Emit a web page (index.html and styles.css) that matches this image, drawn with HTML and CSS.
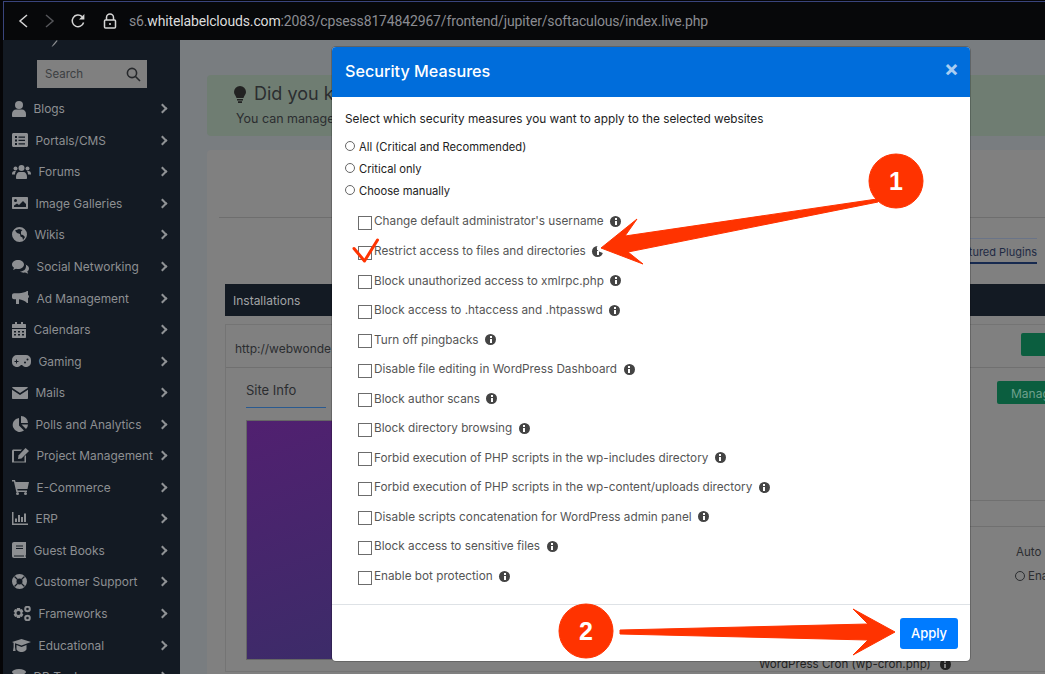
FILE: index.html
```html
<!DOCTYPE html>
<html>
<head>
    <title>Security Measures</title>
    <meta http-equiv='Content-Type' content='text/html; charset=utf-8' />
    <link rel="stylesheet" href="styles.css">
</head>

<body>
<div class="page">
    <div class="urlbar">
        <svg width="14" height="16" viewBox="0 0 14 16" class="navicon"><path d="M11 2 4 8l7 6" /></svg>
        <svg width="14" height="16" viewBox="0 0 14 16" class="navicon dim"><path d="M3 2l7 6-7 6" /></svg>
        <svg width="16" height="16" viewBox="0 0 16 16" class="navicon"><path d="M13.6 9.5A5.8 5.8 0 1 1 12 3.6" /><path class="solid" d="M14.4 1v5.4H9z" /></svg>
        <svg width="14" height="16" viewBox="0 0 14 16" class="navicon lock"><path d="M3.5 7V4.6a3.5 3.5 0 0 1 7 0V7" /><rect x="1.5" y="7" width="11" height="8" rx="1" /><path d="M7 10v2" /></svg>
        <div class="url">s6.<b>whitelabelclouds.com</b>:2083/cpsess8174842967/frontend/jupiter/softaculous/index.live.php</div>
    </div>

    <div class="main">
        <div class="sidebar">
            <div class="logo"><svg width="10" height="8" viewBox="0 0 10 8"><path d="M7 0C5 2 3 4 1.500 7 3 6.500 5 4 7.500 1" /></svg></div>
            <div class="search">
                <span>Search</span>
                <svg width="15" height="15" viewBox="0 0 15 15"><circle cx="6" cy="6" r="4.6" /><path d="M9.5 9.5 14 14" /></svg>
            </div>
            <div class="navlist">
                <div class="navrow"><span class="navlabel"><svg width="14" height="16" viewBox="0 0 14 16"><circle cx="7" cy="4" r="4" /><path d="M0 13c0-3 2-4.5 4-4.5h6c2 0 4 1.500 4 4.500v2c0 .6-.5 1-1 1H1c-.5 0-1-.4-1-1z" /></svg>Blogs</span><i class="chev"></i></div>
                <div class="navrow"><span class="navlabel"><svg width="16" height="14" viewBox="0 0 16 14"><path fill-rule="evenodd" d="M1.500 0h13c.8 0 1.500.7 1.500 1.500v11c0 .8-.7 1.500-1.500 1.500h-13C.7 14 0 13.300 0 12.500v-11C0 .7.700 0 1.500 0zM3 3v2h2V3zm0 3.500v2h2v-2zM3 10v2h2v-2zm3.500-6.500v1.200H13V3.500zm0 3.200v1.200H13V6.700zm0 3.500v1.200H13v-1.200z" /></svg>Portals/CMS</span><i class="chev"></i></div>
                <div class="navrow"><span class="navlabel"><svg width="19" height="14" viewBox="0 0 19 14"><circle cx="3.500" cy="3.500" r="2" /><circle cx="15.500" cy="3.500" r="2" /><circle cx="9.500" cy="3" r="3" /><path d="M0 9c0-2 1-3 2.500-3h1.500C3.500 7 3 8 3 9.500H0zM19 9c0-2-1-3-2.500-3H15c.5 1 1 2 1 3.500h3zM4 12c0-3 1.500-5 3.500-5h4c2 0 3.500 2 3.500 5v1c0 .6-.4 1-1 1H5c-.6 0-1-.4-1-1z" /></svg>Forums</span><i class="chev"></i></div>
                <div class="navrow"><span class="navlabel"><svg width="16" height="12" viewBox="0 0 16 12"><path fill-rule="evenodd" d="M1 0h14c.6 0 1 .4 1 1v10c0 .6-.4 1-1 1H1c-.6 0-1-.4-1-1V1c0-.6.4-1 1-1zm2.500 2a1.500 1.500 0 1 0 0 3 1.500 1.500 0 0 0 0-3zM2 10h12V7l-3-3-4 4-2-1.500-3 2z" /></svg>Image Galleries</span><i class="chev"></i></div>
                <div class="navrow"><span class="navlabel"><svg width="15" height="15" viewBox="0 0 15 15"><path fill-rule="evenodd" d="M7.500 0a7.500 7.500 0 1 1 0 15 7.500 7.500 0 0 1 0-15zM3 3.500 5 6l3 1 .5 2.500 2 1 .5 2.500 2-3-2-2-2-.5V4.500L10.500 3 7 2z" /></svg>Wikis</span><i class="chev"></i></div>
                <div class="navrow"><span class="navlabel"><svg width="17" height="14" viewBox="0 0 17 14"><path d="M6 0c3.300 0 6 2 6 4.500S9.300 9 6 9c-.7 0-1.400-.1-2-.3L1 10l1-2.300C.7 6.900 0 5.800 0 4.500 0 2 2.700 0 6 0z" /><path d="M13 4.500c2.300.5 4 2 4 4 0 1.200-.6 2.200-1.700 3l.9 2.300-3-1.300c-2 .4-4 0-5.200-1 3.500 0 6.500-2 6-7z" /></svg>Social Networking</span><i class="chev"></i></div>
                <div class="navrow"><span class="navlabel"><svg width="17" height="14" viewBox="0 0 17 14"><path d="M16 0v12h-1C13 10 10 8.500 7 8.300V13H4V8.200H2c-1.100 0-2-.9-2-2v-2c0-1.100.9-2 2-2h5C10 2 13 1.500 15 0z" /><path d="M16 4c.7.300 1 .8 1 1.500S16.700 6.700 16 7z" /></svg>Ad Management</span><i class="chev"></i></div>
                <div class="navrow"><span class="navlabel"><svg width="14" height="16" viewBox="0 0 14 16"><path fill-rule="evenodd" d="M3 0h2v2h4V0h2v2h2c.6 0 1 .4 1 1v3H0V3c0-.6.4-1 1-1h2zM0 7h14v8c0 .6-.4 1-1 1H1c-.6 0-1-.4-1-1zm2 2v1.500h2V9zm4 0v1.500h2V9zm4 0v1.500h2V9zm-8 3v1.500h2V12zm4 0v1.500h2V12zm4 0v1.500h2V12z" /></svg>Calendars</span><i class="chev"></i></div>
                <div class="navrow"><span class="navlabel"><svg width="19" height="12" viewBox="0 0 19 12"><path fill-rule="evenodd" d="M5 0h9a5 5 0 0 1 5 5v2a5 5 0 0 1-9 3H9A5 5 0 0 1 0 7V5a5 5 0 0 1 5-5zM4 4.500V6H2.500v1H4v1.500h1V7h1.500V6H5V4.500zm9 2a1 1 0 1 0 0 2 1 1 0 0 0 0-2zm2.500-3a1 1 0 1 0 0 2 1 1 0 0 0 0-2z" /></svg>Gaming</span><i class="chev"></i></div>
                <div class="navrow"><span class="navlabel"><svg width="16" height="12" viewBox="0 0 16 12"><path d="M0 2.800 8 8l8-5.200V11c0 .6-.4 1-1 1H1c-.6 0-1-.4-1-1zM1 0h14c.4 0 .8.300 1 .7L8 6 0 .7C.2.300.6 0 1 0z" /></svg>Mails</span><i class="chev"></i></div>
                <div class="navrow"><span class="navlabel"><svg width="16" height="16" viewBox="0 0 16 16"><path d="M7 2v7.500l5 5A7 7 0 1 1 7 2z" /><path d="M9 0a7 7 0 0 1 7 7H9z" /><path d="M9.500 8.500H16a7 7 0 0 1-2 4.500z" /></svg>Polls and Analytics</span><i class="chev"></i></div>
                <div class="navrow"><span class="navlabel"><svg width="17" height="15" viewBox="0 0 17 15"><path fill-rule="evenodd" d="M1.500 1.500H10L8.500 3H2v10.500h10.500V8.500L14 7v7.500H0V3c0-.8.700-1.500 1.500-1.500z" /><path d="M13.500 0 17 3 9.500 10.500 6 11l.5-3.500z" /></svg>Project Management</span><i class="chev"></i></div>
                <div class="navrow"><span class="navlabel"><svg width="17" height="15" viewBox="0 0 17 15"><path d="M0 0h3l.6 2H17l-1.500 7H5.300l.4 1.500H15V12H4.300L1.900 1.500H0z" /><circle cx="5.500" cy="13.500" r="1.500" /><circle cx="13.500" cy="13.500" r="1.500" /></svg>E-Commerce</span><i class="chev"></i></div>
                <div class="navrow"><span class="navlabel"><svg width="16" height="13" viewBox="0 0 16 13"><path d="M0 0h1.500v11.500H16V13H0zM3 6.500h2V10H3zM6 3h2v7H6zM9 5h2v5H9zM12 1.500h2V10h-2z" /></svg>ERP</span><i class="chev"></i></div>
                <div class="navrow"><span class="navlabel"><svg width="14" height="16" viewBox="0 0 14 16"><path fill-rule="evenodd" d="M2 0h12v12.500c0 .4-.1.800-.4 1v1c.3.100.4.300.4.500v1H2c-1.100 0-2-.9-2-2V2C0 .9.900 0 2 0zm2 3.500v1h7v-1zm0 2.500v1h7V6zm-2 7.500v1h10v-1z" /></svg>Guest Books</span><i class="chev"></i></div>
                <div class="navrow"><span class="navlabel"><svg width="15" height="15" viewBox="0 0 15 15"><path fill-rule="evenodd" d="M7.500 0a7.500 7.500 0 1 1 0 15 7.500 7.500 0 0 1 0-15zm0 4.500a3 3 0 1 0 0 6 3 3 0 0 0 0-6z" /><path class="cut" d="M2.500 2.500l3 3M12.500 2.500l-3 3M2.500 12.500l3-3M12.500 12.500l-3-3" /></svg>Customer Support</span><i class="chev"></i></div>
                <div class="navrow"><span class="navlabel"><svg width="19" height="15" viewBox="0 0 19 15"><path fill-rule="evenodd" d="M5 2h3l.4 1.500 1.500-.5 1.500 2.500-1.100 1 .1.500-.1.500 1.100 1-1.500 2.500-1.500-.5L8 12H5l-.4-1.500-1.500.5L1.600 8.500l1.100-1L2.600 7l.1-.5-1.100-1L3.100 3l1.500.5zM6.500 5a2 2 0 1 0 0 4 2 2 0 0 0 0-4z" /><circle cx="15.500" cy="3" r="2.300" fill="none" stroke="currentColor" stroke-width="2" /><circle cx="15.500" cy="12" r="2.300" fill="none" stroke="currentColor" stroke-width="2" /></svg>Frameworks</span><i class="chev"></i></div>
                <div class="navrow"><span class="navlabel"><svg width="19" height="13" viewBox="0 0 19 13"><path d="M9.500 0 19 3 9.500 6.500 3 4.200V8l.6 4H1l.6-4V3.700L0 3z" /><path d="M4.500 6 9.500 8l5-2v4c0 1.500-2.500 3-5 3s-5-1.500-5-3z" /></svg>Educational</span><i class="chev"></i></div>
                <div class="navrow"><span class="navlabel"><svg width="14" height="16" viewBox="0 0 14 16"><ellipse cx="7" cy="3" rx="7" ry="3" /><path d="M0 5c1 1.500 4 2.200 7 2.200S13 6.500 14 5v3c-1 1.500-4 2.200-7 2.200S1 9.500 0 8zM0 10c1 1.500 4 2.200 7 2.200s6-.7 7-2.200v3c0 1.700-3 3-7 3s-7-1.300-7-3z" /></svg>DB Tools</span><i class="chev"></i></div>
            </div>
        </div>

        <div class="content">
            <div class="alert">
                <div class="alert-title">
                    <svg width="12" height="17" viewBox="0 0 12 17"><path d="M6 0a6 6 0 0 1 6 6c0 2.500-2 3.800-2.500 6h-7C2 9.800 0 8.500 0 6a6 6 0 0 1 6-6z" /><path d="M3 13h6v1.500H3zM4 15.300h4V17H4z" /></svg>
                    Did you know?
                </div>
                <div class="alert-text">You can manage</div>
            </div>

            <div class="card">
                <div class="card-top"></div>
                <div class="tabs"><div class="tab">Featured Plugins</div></div>
                <div class="bar">Installations</div>
                <div class="panel">
                    <div class="panel-head">
                        <span class="site-url">http://webwonde</span>
                        <span class="btn-green short"></span>
                    </div>
                    <div class="panel-body">
                        <div class="site">
                            <div class="site-tab">Site Info</div>
                            <div class="shot"></div>
                        </div>
                        <div class="side">
                            <div class="side-btn"><span class="btn-green">Manage</span></div>
                            <div class="side-line"></div>
                            <div class="side-auto">Auto</div>
                            <div class="side-radio"><input type="radio" class="bgradio" />Enable</div>
                            <div class="side-cron">WordPress Cron (wp-cron.php) <i class="info"></i></div>
                        </div>
                    </div>
                </div>
            </div>
        </div>
    </div>

    <div class="modal">
        <div class="modal-head">
            <span>Security Measures</span>
            <span class="close">&times;</span>
        </div>
        <div class="modal-body">
            <p class="intro">Select which security measures you want to apply to the selected websites</p>
            <div class="radios">
                <label class="radio"><input type="radio" name="level" />All (Critical and Recommended)</label>
                <label class="radio"><input type="radio" name="level" />Critical only</label>
                <label class="radio"><input type="radio" name="level" />Choose manually</label>
            </div>
            <div class="checks">
                <label class="check"><input type="checkbox" />Change default administrator's username<i class="info"></i></label>
                <label class="check"><input type="checkbox" />Restrict access to files and directories<i class="info"></i></label>
                <label class="check"><input type="checkbox" />Block unauthorized access to xmlrpc.php<i class="info"></i></label>
                <label class="check"><input type="checkbox" />Block access to .htaccess and .htpasswd<i class="info"></i></label>
                <label class="check"><input type="checkbox" />Turn off pingbacks<i class="info"></i></label>
                <label class="check"><input type="checkbox" />Disable file editing in WordPress Dashboard<i class="info"></i></label>
                <label class="check"><input type="checkbox" />Block author scans<i class="info"></i></label>
                <label class="check"><input type="checkbox" />Block directory browsing<i class="info"></i></label>
                <label class="check"><input type="checkbox" />Forbid execution of PHP scripts in the wp-includes directory<i class="info"></i></label>
                <label class="check"><input type="checkbox" />Forbid execution of PHP scripts in the wp-content/uploads directory<i class="info"></i></label>
                <label class="check"><input type="checkbox" />Disable scripts concatenation for WordPress admin panel<i class="info"></i></label>
                <label class="check"><input type="checkbox" />Block access to sensitive files<i class="info"></i></label>
                <label class="check"><input type="checkbox" />Enable bot protection<i class="info"></i></label>
            </div>
        </div>
        <div class="modal-foot"><button class="apply">Apply</button></div>
    </div>

    <!-- annotations drawn on top of the screenshot -->
    <svg class="marks" width="1045" height="674" viewBox="0 0 1045 674">
        <g class="halo">
            <path d="M877 199 625 236 637 219 601 248 643 264 628 252 878 202z" />
            <path d="M620 630 868 624 853 609 895 632 853 655 868 640 620 634z" />
        </g>
        <g class="red">
            <path d="M877 199 625 236 637 219 601 248 643 264 628 252 878 202z" />
            <path d="M620 630 868 624 853 609 895 632 853 655 868 640 620 634z" />
            <circle cx="896" cy="181" r="27" />
            <circle cx="586" cy="631" r="27" />
        </g>
        <path class="tick" d="M354 248.500 364.500 261 377.500 240" />
        <text x="896" y="190" class="num">1</text>
        <text x="586" y="640" class="num">2</text>
    </svg>
</div>
</body>

</html>
```

FILE: styles.css
```css
* {
    box-sizing: border-box;
}

body {
    margin: 0;
    background: #000;
    font-family: Inter, 'Noto Sans', sans-serif;
}

.page {
    position: relative;
    width: 1045px;
    height: 674px;
    overflow: hidden;
    padding-left: 3px;
    background: #050507;
}

/* browser bar */
.urlbar {
    display: flex;
    align-items: center;
    height: 39px;
    padding-left: 12px;
    background: #07080a;
    border-top: 1px solid #39447c;
    border-left: 1px solid #39447c;
    margin-top: 1px;
}
.navicon {
    margin-right: 13px;
    fill: none;
    stroke: #d6d6d6;
    stroke-width: 1.5;
}
.navicon.dim {
    stroke: #55565a;
}
.navicon .solid {
    fill: #d6d6d6;
    stroke: none;
}
.navicon.lock {
    margin-left: 4px;
    margin-right: 12px;
}
.url {
    font-family: Roboto, sans-serif;
    font-size: 14px;
    letter-spacing: -.15px;
    color: #8b8c92;
}
.url b {
    font-weight: 400;
    color: #dcdcdc;
}

.main {
    display: flex;
    height: 634px;
}

/* sidebar */
.sidebar {
    flex: none;
    width: 177px;
    background: #131a23;
    color: #8d8f92;
    font-size: 11.9px;
}
.logo {
    height: 20px;
    padding-left: 47px;
}
.logo svg {
    display: block;
    fill: #8d8f92;
}
.search {
    display: flex;
    align-items: center;
    justify-content: space-between;
    width: 110px;
    height: 28px;
    margin-left: 34px;
    padding: 0 6px 0 8px;
    background: #808080;
    color: #3c3f42;
    font-size: 11.5px;
}
.search svg {
    fill: none;
    stroke: #26282b;
    stroke-width: 1.6;
}
.navlist {
    margin-top: 5px;
}
.navrow {
    display: flex;
    align-items: center;
    justify-content: space-between;
    height: 31.55px;
    padding: 0 14px 0 9px;
}
.navlabel {
    display: flex;
    align-items: center;
    gap: 7.5px;
    white-space: nowrap;
}
.navlabel svg {
    flex: none;
    fill: currentColor;
}
.navlabel .cut {
    fill: none;
    stroke: #131a23;
    stroke-width: 1.2;
}
.chev {
    width: 7px;
    height: 7px;
    border-top: 2px solid #8f9295;
    border-right: 2px solid #8f9295;
    transform: rotate(45deg);
}

/* page behind the dialog */
.content {
    flex: none;
    width: 900px;
    padding: 35px 0 0 27px;
    background: #797d80;
    color: #2b2d30;
}
.alert {
    height: 61px;
    padding: 8px 0 0 29px;
    border-radius: 4px;
    background: #6f7d72;
}
.alert-title {
    display: flex;
    align-items: center;
    gap: 8px;
    font-size: 18px;
    line-height: 22px;
    margin-left: -2px;
}
.alert-title svg {
    fill: #222;
}
.alert-text {
    margin-top: 6px;
    font-size: 12.5px;
}
.card {
    margin-top: 14px;
    height: 600px;
    padding: 0 0 0 12px;
    border-radius: 4px;
    background: #808080;
}
.card-top {
    height: 68px;
    border-bottom: 1px solid #6e6e6e;
}
.tabs {
    display: flex;
    justify-content: flex-end;
    margin: 20px 43px 0 0;
}
.tab {
    width: 200px;
    height: 26px;
    padding-top: 6px;
    text-align: right;
    font-size: 11px;
    color: #1f2a44;
    border-top: 1px solid #6a7488;
    border-bottom: 2px solid #16294f;
}
.bar {
    height: 32px;
    margin: 20px 0 0 6px;
    padding: 9px 8px 0;
    background: #131a23;
    color: #a2a4a6;
    font-size: 12px;
}
.panel {
    margin: 8px 0 0 6px;
    border: 1px solid #747474;
    border-right: 0;
}
.panel-head {
    display: flex;
    align-items: center;
    justify-content: space-between;
    height: 43px;
    padding-left: 9px;
    border-bottom: 1px solid #707070;
    font-size: 12px;
}
.site-url {
    padding-top: 5px;
}
.btn-green {
    display: block;
    width: 90px;
    height: 23px;
    padding: 5px 14px;
    border-radius: 2px;
    background: #0b5e3f;
    color: #6fa08d;
    font-size: 12px;
}
.btn-green.short {
    width: 59px;
    margin-top: -4px;
}
.panel-body {
    display: flex;
    justify-content: space-between;
}
.site {
    width: 400px;
    padding: 10px 0 0 20px;
}
.site-tab {
    width: 80px;
    height: 30px;
    padding-top: 4px;
    border-bottom: 1px solid #2a5a90;
    font-size: 13px;
}
.shot {
    width: 380px;
    height: 240px;
    margin-top: 12px;
    border: 1px solid #666;
    background: linear-gradient(160deg, #512070, #343066);
}
.side {
    width: 321px;
    padding-top: 13px;
    font-size: 11.5px;
}
.side-btn {
    padding-left: 238px;
}
.side-line {
    height: 27px;
    margin-top: 96px;
    border-top: 1px solid #707070;
    border-bottom: 1px solid #707070;
}
.side-auto {
    margin: 18px 0 0 257px;
}
.side-radio {
    display: flex;
    align-items: center;
    gap: 3px;
    margin: 10px 0 0 256px;
}
.bgradio {
    appearance: none;
    width: 10px;
    height: 10px;
    margin: 0;
    border: 1px solid #2b2d30;
    border-radius: 50%;
}
.side-cron {
    margin-top: 74px;
    display: flex;
    align-items: center;
    gap: 9px;
    font-size: 11.6px;
    color: #222;
}

/* dialog */
.modal {
    position: absolute;
    top: 47px;
    left: 332px;
    display: flex;
    flex-direction: column;
    width: 638px;
    height: 614px;
    border-radius: 4px;
    background: #fff;
    box-shadow: 0 0 0 1px rgba(0, 0, 0, .2);
    overflow: hidden;
}
.modal-head {
    display: flex;
    align-items: center;
    justify-content: space-between;
    flex: none;
    height: 50px;
    padding: 0 11px 2px 13px;
    background: #006ddb;
    color: #fff;
    font-size: 16.2px;
    font-weight: 500;
}
.close {
    color: #a9cdf2;
    font-size: 22px;
    font-weight: 700;
    line-height: 20px;
    margin-bottom: 6px;
}
.modal-body {
    flex: 1;
    padding: 14px 13px 0;
    font-size: 11.2px;
    color: #222;
}
.intro {
    margin: 0;
    font-size: 11.8px;
    line-height: 16px;
}
.radios {
    margin-top: 9px;
}
.radio {
    display: flex;
    align-items: center;
    gap: 4px;
    height: 22px;
}
.radio input {
    appearance: none;
    width: 10px;
    height: 10px;
    margin: 0;
    position: relative;
    top: -1px;
    border: 1px solid #666;
    border-radius: 50%;
    background: #fff;
}
.checks {
    margin-top: 4.7px;
    padding-left: 13px;
}
.check {
    display: flex;
    align-items: center;
    height: 29.55px;
    font-size: 11.75px;
    color: #555;
}
.check input {
    appearance: none;
    flex: none;
    width: 14px;
    height: 14px;
    margin: 3px 2px 0 0;
    border: 1.5px solid #6c6c6c;
    background: #fff;
}
.info {
    position: relative;
    flex: none;
    display: inline-block;
    width: 11px;
    height: 11px;
    margin-left: 6.500px;
    border-radius: 50%;
    background: #444;
}
.info::before {
    content: "";
    position: absolute;
    left: 4.5px;
    top: 2px;
    width: 2px;
    height: 2px;
    background: #fff;
}
.info::after {
    content: "";
    position: absolute;
    left: 4.5px;
    top: 5px;
    width: 2px;
    height: 4px;
    background: #fff;
}
.side-cron .info {
    margin-left: 0;
    background: #222;
}
.side-cron .info::before,
.side-cron .info::after {
    background: #808080;
}
.modal-foot {
    display: flex;
    justify-content: flex-end;
    align-items: center;
    flex: none;
    height: 57px;
    padding: 0 12px;
    border-top: 1px solid #dee2e6;
}
.apply {
    width: 58px;
    height: 31px;
    padding: 0;
    border: 0;
    border-radius: 3px;
    background: #007bff;
    color: #fff;
    font-family: Inter, sans-serif;
    font-size: 13px;
    font-weight: 500;
}

/* annotations */
.marks {
    position: absolute;
    top: 0;
    left: 0;
}
.marks .halo {
    fill: #fff;
    stroke: #fff;
    stroke-width: 8;
    stroke-linejoin: round;
}
.marks .red {
    fill: #ff3300;
    stroke: #ff3300;
    stroke-width: 1;
    stroke-linejoin: round;
}
.marks .tick {
    fill: none;
    stroke: #ff3300;
    stroke-width: 3;
    stroke-linecap: round;
    stroke-linejoin: round;
}
.num {
    fill: #fff;
    font-family: 'Liberation Sans', sans-serif;
    font-size: 25px;
    font-weight: 700;
    text-anchor: middle;
}
```
